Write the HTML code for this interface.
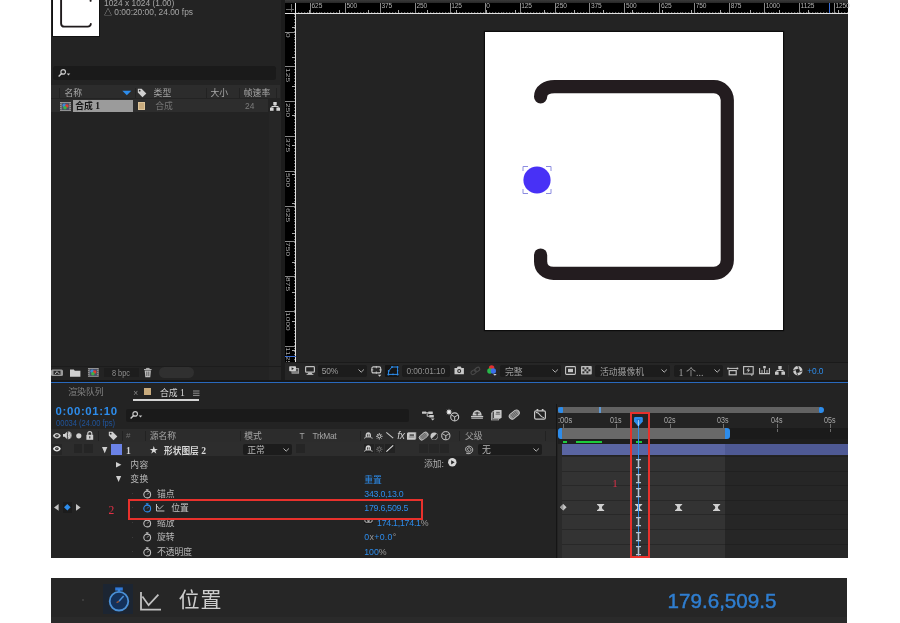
<!DOCTYPE html>
<html><head><meta charset="utf-8"><title>AE</title><style>
*{margin:0;padding:0;box-sizing:border-box}
html,body{width:900px;height:623px;background:#fff;overflow:hidden}
body{position:relative;font-family:"Liberation Sans","Noto Sans CJK SC",sans-serif;font-size:9px;color:#a8a8a8}
.a{position:absolute;display:block}
.t{position:absolute;white-space:nowrap}
svg{overflow:visible}
#w{position:absolute;left:0;top:0;width:900px;height:623px;will-change:transform}
</style></head><body><div id="w">
<div class="a" style="left:51px;top:0px;width:797px;height:558px;background:#232323;"></div>
<div class="a" style="left:52.7px;top:0px;width:46.4px;height:35.7px;background:#fff;box-shadow:0 0 0 1px #121212"></div>
<svg class="a" style="left:53px;top:0px;" width="46" height="36" viewBox="0 0 46 36"><path d="M8.1 0V23.4Q8.1 26.6 11.4 26.6H34.6Q37.6 26.6 37.8 24M37.6 0V0.9" fill="none" stroke="#1f1a1c" stroke-width="1.9" stroke-linecap="round"/></svg>
<div class="t" style="left:104px;top:-1.20px;font-size:8.4px;line-height:8.4px;color:#a6a6a6;">1024 x 1024 (1.00)</div>
<div class="t" style="left:104px;top:8.30px;font-size:8.4px;line-height:8.4px;color:#a6a6a6;"><span style="font-size:8px">△</span> 0:00:20:00, 24.00 fps</div>
<div class="a" style="left:53px;top:66px;width:223px;height:13.6px;background:#1a1a1a;border-radius:2.5px"></div>
<svg class="a" style="left:57.5px;top:68.8px;" width="13" height="8.2" viewBox="0 0 13 8.2"><circle cx="5.2" cy="2.9" r="2.3" fill="none" stroke="#c8c8c8" stroke-width="1.2"/><path d="M3.6 4.6L0.6 7.6" stroke="#c8c8c8" stroke-width="1.4"/><path d="M8.7 4.6H12.3L10.5 6.6z" fill="#c8c8c8"/></svg>
<div class="a" style="left:51px;top:85.4px;width:229px;height:12.6px;background:#2c2c2c;"></div>
<div class="a" style="left:59.0px;top:87.5px;width:1px;height:10px;background:#222;"></div>
<div class="a" style="left:134.5px;top:87.5px;width:1px;height:10px;background:#222;"></div>
<div class="a" style="left:205.5px;top:87.5px;width:1px;height:10px;background:#222;"></div>
<div class="a" style="left:239.0px;top:87.5px;width:1px;height:10px;background:#222;"></div>
<div class="a" style="left:275.5px;top:87.5px;width:1px;height:10px;background:#222;"></div>
<div class="t" style="left:64.4px;top:88.80px;font-size:8.8px;line-height:8.8px;color:#a8a8a8;">名称</div>
<svg class="a" style="left:121.5px;top:90px;" width="10" height="6" viewBox="0 0 10 6"><path d="M0.3 0.8H9.3L4.8 5.2z" fill="#2d8ceb"/></svg>
<svg class="a" style="left:136.5px;top:87.5px;" width="10" height="10" viewBox="0 0 10 10"><path d="M0.8 0.8H4.6L9.3 5.5L5.5 9.3L0.8 4.6z" fill="#d0d0d0"/><circle cx="2.7" cy="2.7" r="0.9" fill="#2d2d2d"/></svg>
<div class="t" style="left:153.6px;top:88.80px;font-size:8.8px;line-height:8.8px;color:#a8a8a8;">类型</div>
<div class="t" style="left:210.5px;top:88.80px;font-size:8.8px;line-height:8.8px;color:#a8a8a8;">大小</div>
<div class="t" style="left:243.8px;top:88.80px;font-size:8.8px;line-height:8.8px;color:#a8a8a8;">帧速率</div>
<div class="a" style="left:51px;top:99.4px;width:216.5px;height:12.6px;background:#2d2d2d;"></div>
<svg class="a" style="left:60px;top:101.5px;" width="11" height="9" viewBox="0 0 11 9"><rect x="0" y="0" width="11" height="9" fill="#9a9a9a"/><rect x="1.7" y="0.9" width="7.6" height="7.2" fill="#4a5068"/><g fill="#3a3a3a"><rect x="0.4" y="1" width="0.9" height="1.1"/><rect x="0.4" y="3" width="0.9" height="1.1"/><rect x="0.4" y="5" width="0.9" height="1.1"/><rect x="0.4" y="7" width="0.9" height="1.1"/><rect x="9.7" y="1" width="0.9" height="1.1"/><rect x="9.7" y="3" width="0.9" height="1.1"/><rect x="9.7" y="5" width="0.9" height="1.1"/><rect x="9.7" y="7" width="0.9" height="1.1"/></g><circle cx="4.3" cy="3.4" r="1.8" fill="#3c8ad8"/><circle cx="6.8" cy="4" r="1.8" fill="#e03a30"/><circle cx="5" cy="5.8" r="1.8" fill="#3cb048"/></svg>
<div class="a" style="left:72.6px;top:99.6px;width:60.4px;height:12.2px;background:#9b9b9b;"></div>
<div class="t" style="left:75.2px;top:102.00px;font-size:8.8px;line-height:8.8px;color:#141414;font-weight:bold">合成 <span style="font-family:'Liberation Serif',serif;font-size:9.5px">1</span></div>
<div class="a" style="left:138px;top:102.4px;width:7px;height:7.2px;background:#c9ab7d;border:0.6px solid #dcc49a"></div>
<div class="t" style="left:155.3px;top:102.00px;font-size:8.8px;line-height:8.8px;color:#747474;">合成</div>
<div class="t" style="left:245px;top:102.10px;font-size:8.4px;line-height:8.4px;color:#7c7c7c;">24</div>
<svg class="a" style="left:270px;top:101.5px;" width="10.0" height="9.0" viewBox="0 0 10 9"><rect x="3.3" y="0" width="3.4" height="3.2" fill="#d4d4d4"/><rect x="0" y="5.6" width="3.6" height="3.2" fill="#d4d4d4"/><rect x="6.4" y="5.6" width="3.6" height="3.2" fill="#d4d4d4"/><path d="M5 3V4.6M1.8 5.8V4.5H8.2V5.8" stroke="#d4d4d4" stroke-width="1" fill="none"/></svg>
<div class="a" style="left:268.5px;top:112px;width:12.5px;height:268px;background:#262626;"></div>
<div class="a" style="left:281px;top:0px;width:4px;height:380px;background:#1c1c1c;"></div>
<div class="a" style="left:51px;top:365.5px;width:230px;height:1px;background:#1c1c1c;"></div>
<svg class="a" style="left:51px;top:369px;" width="12.5" height="7.5" viewBox="0 0 12.5 7.5"><rect x="0" y="0.5" width="12" height="6.5" rx="1.5" fill="#9a9a9a"/><rect x="2.5" y="1.8" width="7" height="4" fill="#2a2a2a"/><path d="M4 5.2L6 2.6L8.5 5.2" stroke="#ddd" stroke-width="0.8" fill="none"/></svg>
<svg class="a" style="left:70px;top:368.5px;" width="10.5" height="8" viewBox="0 0 10.5 8"><path d="M0 0.6H3.8L4.8 1.8H10.4V7.8H0z" fill="#cfcfcf"/></svg>
<svg class="a" style="left:87px;top:368.3px;" width="12.7" height="8.8" viewBox="0 0 11 9"><rect x="0" y="0" width="11" height="9" fill="#9a9a9a"/><rect x="1.7" y="0.9" width="7.6" height="7.2" fill="#4a5068"/><g fill="#3a3a3a"><rect x="0.4" y="1" width="0.9" height="1.1"/><rect x="0.4" y="3" width="0.9" height="1.1"/><rect x="0.4" y="5" width="0.9" height="1.1"/><rect x="0.4" y="7" width="0.9" height="1.1"/><rect x="9.7" y="1" width="0.9" height="1.1"/><rect x="9.7" y="3" width="0.9" height="1.1"/><rect x="9.7" y="5" width="0.9" height="1.1"/><rect x="9.7" y="7" width="0.9" height="1.1"/></g><circle cx="4.3" cy="3.4" r="1.8" fill="#3c8ad8"/><circle cx="6.8" cy="4" r="1.8" fill="#e03a30"/><circle cx="5" cy="5.8" r="1.8" fill="#3cb048"/></svg>
<div class="a" style="left:104px;top:368px;width:34.5px;height:9px;background:#1d1d1d;border-radius:1px"></div>
<div class="t" style="left:112.2px;top:369.20px;font-size:8.4px;line-height:8.4px;color:#909090;transform-origin:0 50%;transform:scaleX(0.875)">8 bpc</div>
<svg class="a" style="left:144px;top:367.8px;" width="7.6" height="9.4" viewBox="0 0 7.6 9.4"><path d="M0 1.6H7.6M2.4 1.4V0.4H5.2V1.4" stroke="#bdbdbd" stroke-width="1" fill="none"/><path d="M0.7 2.6H6.9L6.3 9.2H1.3z" fill="#bdbdbd"/><path d="M2.8 3.6V8M4.8 3.6V8" stroke="#333" stroke-width="0.7"/></svg>
<div class="a" style="left:158.5px;top:367px;width:35px;height:10.5px;background:#303030;border-radius:5.5px"></div>
<div class="a" style="left:285px;top:0px;width:563px;height:3px;background:linear-gradient(#3a3a3a,#262626);"></div>
<div class="a" style="left:285px;top:3px;width:563px;height:11px;background:#000;"></div>
<div class="a" style="left:296px;top:12px;width:552px;height:1px;background:repeating-linear-gradient(90deg,#9a9a9a 0,#9a9a9a 1px,transparent 1px,transparent 2.935px);background-position:2.210px 0;opacity:.8"></div>
<div class="a" style="left:296px;top:13px;width:552px;height:1px;background:#e2e2e2;"></div>
<div class="a" style="left:310px;top:3px;width:1px;height:10px;background:#8a8a8a;"></div>
<div class="t" style="left:311.6px;top:2.90px;font-size:6.6px;line-height:6.6px;color:#b4b4b4;letter-spacing:-0.15px">625</div>
<div class="a" style="left:345px;top:3px;width:1px;height:10px;background:#8a8a8a;"></div>
<div class="t" style="left:346.53000000000003px;top:2.90px;font-size:6.6px;line-height:6.6px;color:#b4b4b4;letter-spacing:-0.15px">500</div>
<div class="a" style="left:380px;top:3px;width:1px;height:10px;background:#8a8a8a;"></div>
<div class="t" style="left:381.46000000000004px;top:2.90px;font-size:6.6px;line-height:6.6px;color:#b4b4b4;letter-spacing:-0.15px">375</div>
<div class="a" style="left:415px;top:3px;width:1px;height:10px;background:#8a8a8a;"></div>
<div class="t" style="left:416.39px;top:2.90px;font-size:6.6px;line-height:6.6px;color:#b4b4b4;letter-spacing:-0.15px">250</div>
<div class="a" style="left:450px;top:3px;width:1px;height:10px;background:#8a8a8a;"></div>
<div class="t" style="left:451.32000000000005px;top:2.90px;font-size:6.6px;line-height:6.6px;color:#b4b4b4;letter-spacing:-0.15px">125</div>
<div class="a" style="left:485px;top:3px;width:1px;height:10px;background:#8a8a8a;"></div>
<div class="t" style="left:486.25px;top:2.90px;font-size:6.6px;line-height:6.6px;color:#b4b4b4;letter-spacing:-0.15px">0</div>
<div class="a" style="left:520px;top:3px;width:1px;height:10px;background:#8a8a8a;"></div>
<div class="t" style="left:521.18px;top:2.90px;font-size:6.6px;line-height:6.6px;color:#b4b4b4;letter-spacing:-0.15px">125</div>
<div class="a" style="left:555px;top:3px;width:1px;height:10px;background:#8a8a8a;"></div>
<div class="t" style="left:556.11px;top:2.90px;font-size:6.6px;line-height:6.6px;color:#b4b4b4;letter-spacing:-0.15px">250</div>
<div class="a" style="left:589px;top:3px;width:1px;height:10px;background:#8a8a8a;"></div>
<div class="t" style="left:591.0400000000001px;top:2.90px;font-size:6.6px;line-height:6.6px;color:#b4b4b4;letter-spacing:-0.15px">375</div>
<div class="a" style="left:624px;top:3px;width:1px;height:10px;background:#8a8a8a;"></div>
<div class="t" style="left:625.97px;top:2.90px;font-size:6.6px;line-height:6.6px;color:#b4b4b4;letter-spacing:-0.15px">500</div>
<div class="a" style="left:659px;top:3px;width:1px;height:10px;background:#8a8a8a;"></div>
<div class="t" style="left:660.9px;top:2.90px;font-size:6.6px;line-height:6.6px;color:#b4b4b4;letter-spacing:-0.15px">625</div>
<div class="a" style="left:694px;top:3px;width:1px;height:10px;background:#8a8a8a;"></div>
<div class="t" style="left:695.83px;top:2.90px;font-size:6.6px;line-height:6.6px;color:#b4b4b4;letter-spacing:-0.15px">750</div>
<div class="a" style="left:729px;top:3px;width:1px;height:10px;background:#8a8a8a;"></div>
<div class="t" style="left:730.76px;top:2.90px;font-size:6.6px;line-height:6.6px;color:#b4b4b4;letter-spacing:-0.15px">875</div>
<div class="a" style="left:764px;top:3px;width:1px;height:10px;background:#8a8a8a;"></div>
<div class="t" style="left:765.6899999999999px;top:2.90px;font-size:6.6px;line-height:6.6px;color:#b4b4b4;letter-spacing:-0.15px">1000</div>
<div class="a" style="left:799px;top:3px;width:1px;height:10px;background:#8a8a8a;"></div>
<div class="t" style="left:800.62px;top:2.90px;font-size:6.6px;line-height:6.6px;color:#b4b4b4;letter-spacing:-0.15px">1125</div>
<div class="a" style="left:834px;top:3px;width:1px;height:10px;background:#8a8a8a;"></div>
<div class="t" style="left:835.5500000000001px;top:2.90px;font-size:6.6px;line-height:6.6px;color:#b4b4b4;letter-spacing:-0.15px">1250</div>
<div class="a" style="left:309px;top:10.3px;width:1px;height:2.7px;background:#a8a8a8;"></div>
<div class="a" style="left:339px;top:10.3px;width:1px;height:2.7px;background:#a8a8a8;"></div>
<div class="a" style="left:368px;top:10.3px;width:1px;height:2.7px;background:#a8a8a8;"></div>
<div class="a" style="left:398px;top:10.3px;width:1px;height:2.7px;background:#a8a8a8;"></div>
<div class="a" style="left:427px;top:10.3px;width:1px;height:2.7px;background:#a8a8a8;"></div>
<div class="a" style="left:456px;top:10.3px;width:1px;height:2.7px;background:#a8a8a8;"></div>
<div class="a" style="left:486px;top:10.3px;width:1px;height:2.7px;background:#a8a8a8;"></div>
<div class="a" style="left:515px;top:10.3px;width:1px;height:2.7px;background:#a8a8a8;"></div>
<div class="a" style="left:544px;top:10.3px;width:1px;height:2.7px;background:#a8a8a8;"></div>
<div class="a" style="left:574px;top:10.3px;width:1px;height:2.7px;background:#a8a8a8;"></div>
<div class="a" style="left:603px;top:10.3px;width:1px;height:2.7px;background:#a8a8a8;"></div>
<div class="a" style="left:632px;top:10.3px;width:1px;height:2.7px;background:#a8a8a8;"></div>
<div class="a" style="left:662px;top:10.3px;width:1px;height:2.7px;background:#a8a8a8;"></div>
<div class="a" style="left:691px;top:10.3px;width:1px;height:2.7px;background:#a8a8a8;"></div>
<div class="a" style="left:720px;top:10.3px;width:1px;height:2.7px;background:#a8a8a8;"></div>
<div class="a" style="left:750px;top:10.3px;width:1px;height:2.7px;background:#a8a8a8;"></div>
<div class="a" style="left:779px;top:10.3px;width:1px;height:2.7px;background:#a8a8a8;"></div>
<div class="a" style="left:808px;top:10.3px;width:1px;height:2.7px;background:#a8a8a8;"></div>
<div class="a" style="left:838px;top:10.3px;width:1px;height:2.7px;background:#a8a8a8;"></div>
<div class="a" style="left:829px;top:3px;width:1px;height:10px;background:#3a6fd8;"></div>
<div class="a" style="left:285px;top:14px;width:11px;height:348px;background:#000;"></div>
<div class="a" style="left:294px;top:14px;width:1px;height:348px;background:repeating-linear-gradient(180deg,#9a9a9a 0,#9a9a9a 1px,transparent 1px,transparent 2.935px);background-position:0 2.110px;opacity:.8"></div>
<div class="a" style="left:295px;top:14px;width:1px;height:348px;background:#e2e2e2;"></div>
<div class="a" style="left:285px;top:32px;width:10px;height:1px;background:#8a8a8a;"></div>
<div class="t" style="left:289.5px;top:33.0px;font-size:6.5px;line-height:6.5px;color:#a8a8a8;transform-origin:0 0;transform:rotate(90deg) scale(1.3,0.8);letter-spacing:0px">0</div>
<div class="a" style="left:285px;top:66px;width:10px;height:1px;background:#8a8a8a;"></div>
<div class="t" style="left:289.5px;top:67.9px;font-size:6.5px;line-height:6.5px;color:#a8a8a8;transform-origin:0 0;transform:rotate(90deg) scale(1.3,0.8);letter-spacing:0px">125</div>
<div class="a" style="left:285px;top:101px;width:10px;height:1px;background:#8a8a8a;"></div>
<div class="t" style="left:289.5px;top:102.8px;font-size:6.5px;line-height:6.5px;color:#a8a8a8;transform-origin:0 0;transform:rotate(90deg) scale(1.3,0.8);letter-spacing:0px">250</div>
<div class="a" style="left:285px;top:136px;width:10px;height:1px;background:#8a8a8a;"></div>
<div class="t" style="left:289.5px;top:137.7px;font-size:6.5px;line-height:6.5px;color:#a8a8a8;transform-origin:0 0;transform:rotate(90deg) scale(1.3,0.8);letter-spacing:0px">375</div>
<div class="a" style="left:285px;top:171px;width:10px;height:1px;background:#8a8a8a;"></div>
<div class="t" style="left:289.5px;top:172.6px;font-size:6.5px;line-height:6.5px;color:#a8a8a8;transform-origin:0 0;transform:rotate(90deg) scale(1.3,0.8);letter-spacing:0px">500</div>
<div class="a" style="left:285px;top:206px;width:10px;height:1px;background:#8a8a8a;"></div>
<div class="t" style="left:289.5px;top:207.5px;font-size:6.5px;line-height:6.5px;color:#a8a8a8;transform-origin:0 0;transform:rotate(90deg) scale(1.3,0.8);letter-spacing:0px">625</div>
<div class="a" style="left:285px;top:241px;width:10px;height:1px;background:#8a8a8a;"></div>
<div class="t" style="left:289.5px;top:242.4px;font-size:6.5px;line-height:6.5px;color:#a8a8a8;transform-origin:0 0;transform:rotate(90deg) scale(1.3,0.8);letter-spacing:0px">750</div>
<div class="a" style="left:285px;top:276px;width:10px;height:1px;background:#8a8a8a;"></div>
<div class="t" style="left:289.5px;top:277.3px;font-size:6.5px;line-height:6.5px;color:#a8a8a8;transform-origin:0 0;transform:rotate(90deg) scale(1.3,0.8);letter-spacing:0px">875</div>
<div class="a" style="left:285px;top:311px;width:10px;height:1px;background:#8a8a8a;"></div>
<div class="t" style="left:289.5px;top:312.2px;font-size:6.5px;line-height:6.5px;color:#a8a8a8;transform-origin:0 0;transform:rotate(90deg) scale(1.3,0.8);letter-spacing:0px">1000</div>
<div class="a" style="left:285px;top:346px;width:10px;height:1px;background:#8a8a8a;"></div>
<div class="t" style="left:289.5px;top:347.1px;font-size:6.5px;line-height:6.5px;color:#a8a8a8;transform-origin:0 0;transform:rotate(90deg) scale(1.3,0.8);letter-spacing:0px">1125</div>
<div class="a" style="left:292.3px;top:27px;width:2.7px;height:1px;background:#a8a8a8;"></div>
<div class="a" style="left:292.3px;top:57px;width:2.7px;height:1px;background:#a8a8a8;"></div>
<div class="a" style="left:292.3px;top:86px;width:2.7px;height:1px;background:#a8a8a8;"></div>
<div class="a" style="left:292.3px;top:115px;width:2.7px;height:1px;background:#a8a8a8;"></div>
<div class="a" style="left:292.3px;top:145px;width:2.7px;height:1px;background:#a8a8a8;"></div>
<div class="a" style="left:292.3px;top:174px;width:2.7px;height:1px;background:#a8a8a8;"></div>
<div class="a" style="left:292.3px;top:203px;width:2.7px;height:1px;background:#a8a8a8;"></div>
<div class="a" style="left:292.3px;top:233px;width:2.7px;height:1px;background:#a8a8a8;"></div>
<div class="a" style="left:292.3px;top:262px;width:2.7px;height:1px;background:#a8a8a8;"></div>
<div class="a" style="left:292.3px;top:292px;width:2.7px;height:1px;background:#a8a8a8;"></div>
<div class="a" style="left:292.3px;top:321px;width:2.7px;height:1px;background:#a8a8a8;"></div>
<div class="a" style="left:292.3px;top:350px;width:2.7px;height:1px;background:#a8a8a8;"></div>
<div class="a" style="left:285px;top:356px;width:11px;height:1px;background:#3a6fd8;"></div>
<div class="a" style="left:285px;top:3px;width:11px;height:11px;background:#000;"></div>
<div class="a" style="left:285px;top:13px;width:11px;height:1px;background:#e4e4e4;"></div>
<div class="a" style="left:295px;top:3px;width:1px;height:11px;background:#e4e4e4;"></div>
<div class="a" style="left:291px;top:4px;width:1px;height:8px;background:#6a6a6a;"></div>
<div class="a" style="left:286px;top:9px;width:8px;height:1px;background:#6a6a6a;"></div>
<div class="a" style="left:484.6px;top:31.8px;width:298.4px;height:298px;background:#fff;box-shadow:0 0 0 1.2px #0c0c0c"></div>
<svg class="a" style="left:485px;top:32px;" width="298" height="298" viewBox="0 0 298 298"><path d="M55.6 64.8C55.6 58.5 61.5 54.6 69.5 54.6H228.8A13.5 13.5 0 0 1 242.3 68.1V227.9A13.5 13.5 0 0 1 228.8 241.4H68.5C61 241.4 55.6 236.4 55.6 229.4V223" fill="none" stroke="#231c1f" stroke-width="13.2" stroke-linecap="round"/><circle cx="52" cy="148" r="13.6" fill="#4831f6"/><path d="M38 139V134.5H43M61 134.5H66V139M66 157V161.5H61M43 161.5H38V157" fill="none" stroke="#8c8ce0" stroke-width="1"/></svg>
<div class="a" style="left:285px;top:362px;width:563px;height:1px;background:#1a1a1a;"></div>
<div class="a" style="left:285px;top:363px;width:563px;height:17px;background:#262626;"></div>
<svg class="a" style="left:288.8px;top:366.2px;" width="10" height="7.6" viewBox="0 0 10 7.6"><rect x="3" y="2.6" width="6.6" height="4.6" fill="#4a4a4a" stroke="#a8a8a8" stroke-width="0.9"/><path d="M4 5.4H9.4M4 6.4H9.4" stroke="#a8a8a8" stroke-width="0.5"/><rect x="0.2" y="0.2" width="6.8" height="5" rx="0.7" fill="#cdcdcd"/><path d="M2.6 1.3V4.1L5 2.7z" fill="#222"/></svg>
<svg class="a" style="left:304.5px;top:365.8px;" width="10" height="9" viewBox="0 0 10 9"><rect x="0.6" y="0.6" width="8.8" height="5.6" rx="0.8" fill="none" stroke="#bdbdbd" stroke-width="1.2"/><path d="M3.4 6.4H6.6L7.4 8.2H2.6z" fill="#bdbdbd"/><path d="M1.6 8.4H8.4" stroke="#bdbdbd" stroke-width="0.9"/></svg>
<div class="a" style="left:318px;top:364.5px;width:49px;height:12.5px;background:#1c1c1c;border-radius:2px"></div>
<div class="t" style="left:321.8px;top:367.40px;font-size:8.4px;line-height:8.4px;color:#9e9e9e;letter-spacing:-0.15px">50%</div>
<svg class="a" style="left:357.8px;top:368.7px;" width="6.4" height="4" viewBox="0 0 6.4 4"><path d="M0.5 0.5L3.2 3.2L5.9 0.5" fill="none" stroke="#b4b4b4" stroke-width="1"/></svg>
<svg class="a" style="left:370.5px;top:365.8px;" width="10.8" height="11" viewBox="0 0 10.8 11"><rect x="0.9" y="0.9" width="8.8" height="6" rx="1.3" fill="none" stroke="#c8c8c8" stroke-width="1.1"/><path d="M5.3 0V2.3M5.3 5.5V7.8M0 3.9H2.3M8.3 3.9H10.6" stroke="#c8c8c8" stroke-width="0.9"/><path d="M6.9 8.7H10.3L8.6 10.7z" fill="#c8c8c8"/></svg>
<div class="a" style="left:385px;top:364.5px;width:14px;height:12.5px;background:#151515;border-radius:1px"></div>
<svg class="a" style="left:386.5px;top:366px;" width="11.5" height="9.5" viewBox="0 0 11.5 9.5"><path d="M1.4 8.4L1.7 4.9L5 1H10.6V8.4z" fill="none" stroke="#2d8ceb" stroke-width="1"/><g fill="#2d8ceb"><circle cx="1.4" cy="8.4" r="1"/><circle cx="1.7" cy="4.9" r="0.9"/><circle cx="5" cy="1" r="0.9"/><circle cx="10.6" cy="1" r="0.9"/><circle cx="10.6" cy="8.4" r="1"/><circle cx="10.6" cy="4.7" r="0.8"/><circle cx="6" cy="8.4" r="0.8"/></g></svg>
<div class="a" style="left:401.5px;top:364.5px;width:48.5px;height:12.5px;background:#1c1c1c;border-radius:2px"></div>
<div class="t" style="left:406.5px;top:367.20px;font-size:8.4px;line-height:8.4px;color:#8e8e8e;letter-spacing:-0.1px">0:00:01:10</div>
<svg class="a" style="left:453.8px;top:366px;" width="10.4" height="8.8" viewBox="0 0 10.4 8.8"><path d="M0.5 2H2.8L3.7 0.5H6.7L7.6 2H9.9V8.3H0.5z" fill="#c8c8c8"/><circle cx="5.2" cy="5" r="2" fill="#262626"/><circle cx="5.2" cy="5" r="1" fill="#c8c8c8"/></svg>
<svg class="a" style="left:470px;top:365.5px;" width="11" height="10" viewBox="0 0 11 10"><rect x="0.8" y="4.4" width="5.6" height="3.6" rx="1.8" transform="rotate(-35 3.6 6.2)" fill="none" stroke="#484848" stroke-width="1.1"/><rect x="4.4" y="1.8" width="5.6" height="3.6" rx="1.8" transform="rotate(-35 7.2 3.6)" fill="none" stroke="#484848" stroke-width="1.1"/></svg>
<svg class="a" style="left:486.5px;top:364.8px;" width="10" height="11" viewBox="0 0 10 11"><circle cx="4.6" cy="3" r="2.7" fill="#e23030"/><circle cx="2.9" cy="6" r="2.7" fill="#28b84a"/><circle cx="6.3" cy="6" r="2.7" fill="#3b6fe8"/><path d="M6.2 9H9.6L7.9 10.8z" fill="#d0d0d0"/></svg>
<div class="a" style="left:499.5px;top:364.5px;width:61.5px;height:12.5px;background:#1c1c1c;border-radius:2px"></div>
<div class="t" style="left:505px;top:368.00px;font-size:8.8px;line-height:8.8px;color:#9e9e9e;">完整</div>
<svg class="a" style="left:551.8px;top:368.7px;" width="6.4" height="4" viewBox="0 0 6.4 4"><path d="M0.5 0.5L3.2 3.2L5.9 0.5" fill="none" stroke="#b4b4b4" stroke-width="1"/></svg>
<svg class="a" style="left:565px;top:366.2px;" width="11" height="9" viewBox="0 0 11 9"><rect x="0.6" y="0.6" width="9.8" height="7.8" rx="0.8" fill="none" stroke="#c4c4c4" stroke-width="1.1"/><rect x="3" y="2.8" width="5" height="3.4" fill="#c4c4c4"/></svg>
<svg class="a" style="left:581.2px;top:366.4px;" width="10.8" height="8.6" viewBox="0 0 10.8 8.6"><rect x="0" y="0" width="10.8" height="8.6" rx="0.8" fill="#b8b8b8"/><g fill="#2a2a2a"><rect x="1.4" y="1.3" width="2" height="2"/><rect x="5.4" y="1.3" width="2" height="2"/><rect x="3.4" y="3.3" width="2" height="2"/><rect x="7.4" y="3.3" width="2" height="2"/><rect x="1.4" y="5.3" width="2" height="2"/><rect x="5.4" y="5.3" width="2" height="2"/></g></svg>
<div class="a" style="left:595.3px;top:364.5px;width:74.7px;height:12.5px;background:#1c1c1c;border-radius:2px"></div>
<div class="t" style="left:600px;top:368.00px;font-size:8.8px;line-height:8.8px;color:#9e9e9e;">活动摄像机</div>
<svg class="a" style="left:660.8px;top:368.7px;" width="6.4" height="4" viewBox="0 0 6.4 4"><path d="M0.5 0.5L3.2 3.2L5.9 0.5" fill="none" stroke="#b4b4b4" stroke-width="1"/></svg>
<div class="a" style="left:674px;top:364.5px;width:49px;height:12.5px;background:#1c1c1c;border-radius:2px"></div>
<div class="t" style="left:678.5px;top:367.90px;font-size:9px;line-height:9px;color:#9e9e9e;font-family:'Liberation Serif','Noto Sans CJK SC',serif;font-size:10px">1 个...</div>
<svg class="a" style="left:713.8px;top:368.7px;" width="6.4" height="4" viewBox="0 0 6.4 4"><path d="M0.5 0.5L3.2 3.2L5.9 0.5" fill="none" stroke="#b4b4b4" stroke-width="1"/></svg>
<svg class="a" style="left:726.5px;top:366.5px;" width="11.5" height="8.5" viewBox="0 0 11.5 8.5"><path d="M0.8 1.4H10.6" stroke="#c4c4c4" stroke-width="1"/><circle cx="1" cy="1.4" r="1" fill="#c4c4c4"/><circle cx="10.4" cy="1.4" r="1" fill="#c4c4c4"/><rect x="2.2" y="3.6" width="7" height="4.2" fill="none" stroke="#c4c4c4" stroke-width="1.2"/></svg>
<svg class="a" style="left:743px;top:365.8px;" width="11" height="10" viewBox="0 0 11 10"><rect x="0.6" y="0.6" width="9.6" height="7.4" fill="none" stroke="#c4c4c4" stroke-width="1.1"/><path d="M6 1.6L3.4 4.6H5.2L4.4 7L7.2 3.8H5.4z" fill="#c4c4c4"/><path d="M7.2 8.4H10.4L8.8 10z" fill="#c4c4c4"/></svg>
<svg class="a" style="left:759px;top:366px;" width="11" height="8.5" viewBox="0 0 11 8.5"><path d="M0.6 2V7.6H10.4V2" fill="none" stroke="#c4c4c4" stroke-width="1.1"/><rect x="4.2" y="0" width="2.6" height="2.4" fill="#c4c4c4"/><path d="M3 4V7.4M5.5 2.6V7.4M8 4V7.4" stroke="#c4c4c4" stroke-width="0.9"/></svg>
<svg class="a" style="left:774.7px;top:366.2px;" width="10.0" height="9.0" viewBox="0 0 10 9"><rect x="3.3" y="0" width="3.4" height="3.2" fill="#c8c8c8"/><rect x="0" y="5.6" width="3.6" height="3.2" fill="#c8c8c8"/><rect x="6.4" y="5.6" width="3.6" height="3.2" fill="#c8c8c8"/><path d="M5 3V4.6M1.8 5.8V4.5H8.2V5.8" stroke="#c8c8c8" stroke-width="1" fill="none"/></svg>
<div class="a" style="left:788px;top:365px;width:1px;height:12px;background:#333;"></div>
<svg class="a" style="left:792.8px;top:365.8px;" width="9.6" height="9.6" viewBox="0 0 9.6 9.6"><circle cx="4.8" cy="4.8" r="3.4" fill="none" stroke="#cccccc" stroke-width="2.6"/><path d="M4.8 0L6 3.2M9.6 4.8L6.6 6M4.8 9.6L3.6 6.4M0 4.8L3 3.6" stroke="#262626" stroke-width="0.8"/></svg>
<div class="t" style="left:807.3px;top:367.00px;font-size:8.4px;line-height:8.4px;color:#2d8ceb;letter-spacing:-0.1px">+0.0</div>
<div class="a" style="left:51px;top:380px;width:797px;height:1.6px;background:#171717;"></div>
<div class="a" style="left:51px;top:381.6px;width:797px;height:1.6px;background:#2969bd;"></div>
<div class="t" style="left:68.3px;top:388.40px;font-size:8.8px;line-height:8.8px;color:#858585;">渲染队列</div>
<div class="t" style="left:133.2px;top:389.20px;font-size:8.4px;line-height:8.4px;color:#8c8c8c;">×</div>
<div class="a" style="left:144px;top:388px;width:7px;height:7px;background:#c9ab7d;"></div>
<div class="t" style="left:160px;top:388.70px;font-size:8.8px;line-height:8.8px;color:#d2d2d2;">合成 <span style="font-family:'Liberation Serif',serif;font-size:9.8px">1</span></div>
<svg class="a" style="left:192.5px;top:389.5px;" width="6.5" height="6.5" viewBox="0 0 6.5 6.5"><path d="M0 1H6.5M0 3.2H6.5M0 5.4H6.5" stroke="#909090" stroke-width="1"/></svg>
<div class="a" style="left:133px;top:399.4px;width:66.3px;height:1.8px;background:#d4d4d4;"></div>
<div class="t" style="left:55.5px;top:405.50px;font-size:11.4px;line-height:11.4px;color:#2d8ceb;font-weight:bold;letter-spacing:0.65px">0:00:01:10</div>
<div class="t" style="left:56px;top:418.50px;font-size:8.4px;line-height:8.4px;color:#20549a;transform-origin:0 50%;transform:scaleX(0.9)">00034 (24.00 fps)</div>
<div class="a" style="left:126px;top:409px;width:283px;height:12.5px;background:#1a1a1a;border-radius:2px"></div>
<svg class="a" style="left:130.3px;top:411.2px;" width="13" height="8.2" viewBox="0 0 13 8.2"><circle cx="5.2" cy="2.9" r="2.3" fill="none" stroke="#c8c8c8" stroke-width="1.2"/><path d="M3.6 4.6L0.6 7.6" stroke="#c8c8c8" stroke-width="1.4"/><path d="M8.7 4.6H12.3L10.5 6.6z" fill="#c8c8c8"/></svg>
<svg class="a" style="left:421.5px;top:410.5px;" width="12.6" height="9.6" viewBox="0 0 12.6 9.6"><path d="M3 1.7H7M5.2 1.7V5.3H7.4" stroke="#c8c8c8" stroke-width="0.9" fill="none"/><rect x="0" y="0.6" width="4.2" height="2.2" rx="0.5" fill="#c8c8c8"/><rect x="6.2" y="0.4" width="4.6" height="2.6" rx="0.5" fill="#c8c8c8"/><rect x="7.2" y="4" width="4.6" height="2.6" rx="0.5" fill="#c8c8c8"/><path d="M8.8 7.6H12.6L10.7 9.6z" fill="#c8c8c8"/></svg>
<svg class="a" style="left:445.6px;top:408.6px;" width="13.2" height="12.4" viewBox="0 0 13.2 12.4"><path d="M3 -0.4L3.8 2.2L6.4 3L3.8 3.8L3 6.4L2.2 3.8L-0.4 3L2.2 2.2z" fill="#ececec"/><path d="M0.6 0.6L3 1.8L5.4 0.6L4.2 3L5.4 5.4L3 4.2L0.6 5.4L1.8 3z" fill="#dcdcdc"/><circle cx="3" cy="3" r="1.5" fill="#f0f0f0"/><circle cx="8.7" cy="7.9" r="4" fill="#232323" stroke="#c8c8c8" stroke-width="1.1"/><path d="M8.7 7.9V11.6M8.7 7.9L5.4 6M8.7 7.9L12 6" stroke="#c8c8c8" stroke-width="1" fill="none"/></svg>
<svg class="a" style="left:470.8px;top:409.8px;" width="12.2" height="9" viewBox="0 0 12.2 9"><path d="M1.5 5.6C1.5 2.4 3.6 0.2 6.1 0.2S10.7 2.4 10.7 5.6z" fill="#c8c8c8"/><rect x="0" y="5.9" width="12.2" height="1.3" fill="#c8c8c8"/><rect x="0.3" y="7.6" width="11.6" height="1.3" fill="#c8c8c8" opacity="0.8"/><path d="M6.1 1.8V5.6" stroke="#232323" stroke-width="1"/><path d="M3.6 3H8.6" stroke="#232323" stroke-width="0.9"/></svg>
<svg class="a" style="left:490.5px;top:409.5px;" width="10.6" height="10.4" viewBox="0 0 10.6 10.4"><rect x="0.5" y="3" width="7" height="6.9" fill="#232323" stroke="#a0a0a0" stroke-width="1"/><rect x="1.8" y="1.6" width="7.2" height="7" fill="#232323" stroke="#b0b0b0" stroke-width="0.9"/><rect x="3" y="0" width="7.6" height="8" rx="0.5" fill="#c8c8c8"/><rect x="5.2" y="1.8" width="3.6" height="1.6" fill="#666"/><rect x="4.6" y="3.6" width="4.6" height="1.4" fill="#8a8a8a"/></svg>
<svg class="a" style="left:509.2px;top:410.4px;" width="10.488000000000001" height="9.200000000000001" viewBox="0 0 11.4 10"><g transform="rotate(-38 5.7 5)"><rect x="-0.4" y="1.9" width="12.2" height="6.2" rx="3.1" fill="#8e8e8e" stroke="#c8c8c8" stroke-width="1"/><path d="M3 2.2V7.8M4.8 2V8M6.6 2V8M8.4 2.2V7.8" stroke="#5a5a5a" stroke-width="0.8"/></g></svg>
<svg class="a" style="left:533.8px;top:409.2px;" width="12" height="10.8" viewBox="0 0 12 10.8"><rect x="0.6" y="1.8" width="10.8" height="8.4" rx="1.4" fill="none" stroke="#c8c8c8" stroke-width="1.2"/><rect x="2.6" y="0" width="1.7" height="1.8" fill="#c8c8c8"/><rect x="7.8" y="0" width="1.7" height="1.8" fill="#c8c8c8"/><path d="M1.8 3.4C7 3.4 5 8.7 10.2 8.7" fill="none" stroke="#c8c8c8" stroke-width="1.1"/></svg>
<div class="a" style="left:51px;top:428.8px;width:504.6px;height:13px;background:#2c2c2c;"></div>
<svg class="a" style="left:52.5px;top:433px;" width="7.8" height="5.6" viewBox="0 0 7.8 5.6"><path d="M0 2.8C1.6 -0.8 6.2 -0.8 7.8 2.8C6.2 6.4 1.6 6.4 0 2.8z" fill="#d0d0d0"/><ellipse cx="3.9" cy="2.8" rx="1.9" ry="1.5" fill="#222"/><circle cx="3.9" cy="2.8" r="0.55" fill="#d0d0d0"/></svg>
<svg class="a" style="left:63.2px;top:431.3px;" width="8.8" height="8.6" viewBox="0 0 8.8 8.6"><path d="M0 2.9H1.7L3.9 0.7V7.9L1.7 5.7H0z" fill="#d4d4d4"/><path d="M4.7 0.2A4.1 4.1 0 0 1 4.7 8.4z" fill="#9a9a9a"/><path d="M5.2 2.2Q6.4 4.3 5.2 6.4M6 0.9Q8.6 4.3 6 7.7" fill="none" stroke="#e0e0e0" stroke-width="0.9"/></svg>
<svg class="a" style="left:75.8px;top:432.7px;" width="5.6" height="5.6" viewBox="0 0 5.6 5.6"><circle cx="2.8" cy="2.8" r="2.6" fill="#d0d0d0"/></svg>
<svg class="a" style="left:85.8px;top:431px;" width="7.6" height="9" viewBox="0 0 7.6 9"><path d="M1.8 4V2.6A2 2 0 0 1 5.8 2.6V4" fill="none" stroke="#d0d0d0" stroke-width="1.1"/><rect x="0.4" y="3.8" width="6.8" height="5" fill="#d0d0d0"/><rect x="3.3" y="5.2" width="1" height="2.2" fill="#2a2a2a"/></svg>
<div class="a" style="left:97.5px;top:430.5px;width:1px;height:10px;background:#222;"></div>
<div class="a" style="left:121.5px;top:430.5px;width:1px;height:10px;background:#222;"></div>
<div class="a" style="left:144.5px;top:430.5px;width:1px;height:10px;background:#222;"></div>
<div class="a" style="left:239.5px;top:430.5px;width:1px;height:10px;background:#222;"></div>
<div class="a" style="left:360.0px;top:430.5px;width:1px;height:10px;background:#222;"></div>
<div class="a" style="left:458.5px;top:430.5px;width:1px;height:10px;background:#222;"></div>
<div class="a" style="left:545.0px;top:430.5px;width:1px;height:10px;background:#222;"></div>
<svg class="a" style="left:107.5px;top:430.8px;" width="10" height="10" viewBox="0 0 10 10"><path d="M0.8 0.8H4.6L9.3 5.5L5.5 9.3L0.8 4.6z" fill="#d0d0d0"/><circle cx="2.7" cy="2.7" r="0.9" fill="#2d2d2d"/></svg>
<div class="t" style="left:126px;top:432.20px;font-size:8px;line-height:8px;color:#6e6e6e;">#</div>
<div class="t" style="left:149.7px;top:432.20px;font-size:8.8px;line-height:8.8px;color:#a4a4a4;">源名称</div>
<div class="t" style="left:244.3px;top:432.20px;font-size:8.8px;line-height:8.8px;color:#a4a4a4;">模式</div>
<div class="t" style="left:299.6px;top:431.90px;font-size:8.4px;line-height:8.4px;color:#a4a4a4;">T</div>
<div class="t" style="left:312.5px;top:431.90px;font-size:8.4px;line-height:8.4px;color:#a4a4a4;letter-spacing:-0.32px">TrkMat</div>
<svg class="a" style="left:364.4px;top:432px;" width="8.6" height="6.8" viewBox="0 0 8.6 6.8"><path d="M1.6 5V3.4C1.6 1.4 2.8 0.2 4.3 0.2S7 1.4 7 3.4V5z" fill="#c8c8c8"/><rect x="3.05" y="2.3" width="0.8" height="2.7" fill="#2c2c2c"/><rect x="4.75" y="2.3" width="0.8" height="2.7" fill="#2c2c2c"/><path d="M0 6.2C1.2 6.2 1.6 5.6 2 5H6.6C7 5.6 7.4 6.2 8.6 6.2" stroke="#c8c8c8" stroke-width="0.9" fill="none"/></svg>
<svg class="a" style="left:376.2px;top:432.5px;" width="6.6" height="6.6" viewBox="0 0 6.6 6.6"><circle cx="3.3" cy="3.3" r="1.6" fill="none" stroke="#c8c8c8" stroke-width="1"/><path d="M3.3 0V1.3M3.3 5.3V6.6M0 3.3H1.3M5.3 3.3H6.6M1 1L1.9 1.9M4.7 4.7L5.6 5.6M5.6 1L4.7 1.9M1 5.6L1.9 4.7" stroke="#c8c8c8" stroke-width="0.9"/></svg>
<svg class="a" style="left:386.3px;top:432.3px;" width="7.5" height="6.4" viewBox="0 0 7.5 6.4"><path d="M0.3 0.3L7.2 6.1" stroke="#c8c8c8" stroke-width="1.1"/></svg>
<div class="t" style="left:397.2px;top:431.20px;font-size:10.4px;line-height:10.4px;color:#c8c8c8;font-family:'Liberation Sans',sans-serif;letter-spacing:-0.2px"><i>fx</i></div>
<svg class="a" style="left:407.4px;top:431.7px;" width="9.3" height="7.8" viewBox="0 0 9.3 7.8"><rect x="0.9" y="0" width="8.4" height="7" rx="0.6" fill="#8a8a8a"/><rect x="0" y="0.8" width="8.6" height="7" rx="0.6" fill="#c8c8c8"/><rect x="2.6" y="2.2" width="4.4" height="2" fill="#5a5a5a"/><rect x="1.8" y="4.4" width="5.6" height="1.3" fill="#8c8c8c"/></svg>
<svg class="a" style="left:418.6px;top:431.6px;" width="9.347999999999999" height="8.2" viewBox="0 0 11.4 10"><g transform="rotate(-38 5.7 5)"><rect x="-0.4" y="1.9" width="12.2" height="6.2" rx="3.1" fill="#8e8e8e" stroke="#c8c8c8" stroke-width="1"/><path d="M3 2.2V7.8M4.8 2V8M6.6 2V8M8.4 2.2V7.8" stroke="#5a5a5a" stroke-width="0.8"/></g></svg>
<svg class="a" style="left:430px;top:431.6px;" width="8.4" height="8.4" viewBox="0 0 8.4 8.4"><circle cx="4.2" cy="4.2" r="3.7" fill="#c8c8c8"/><path d="M1.6 6.8A3.7 3.7 0 0 0 6.8 1.6z" fill="#2d2d2d"/></svg>
<svg class="a" style="left:440.6px;top:431.2px;" width="9.6" height="9.4" viewBox="0 0 9.6 9.4"><circle cx="4.8" cy="4.7" r="4.1" fill="none" stroke="#c8c8c8" stroke-width="1"/><path d="M4.8 4.7V8.6M4.8 4.7L1.4 2.7M4.8 4.7L8.2 2.7" stroke="#c8c8c8" stroke-width="0.9"/></svg>
<div class="t" style="left:465px;top:432.20px;font-size:8.8px;line-height:8.8px;color:#a4a4a4;">父级</div>
<div class="a" style="left:51px;top:442.3px;width:504.6px;height:14px;background:#2d2d2d;"></div>
<div class="a" style="left:73.6px;top:444.2px;width:8.8px;height:9px;background:#252525;"></div>
<div class="a" style="left:84.3px;top:444.2px;width:9.2px;height:9px;background:#252525;"></div>
<div class="a" style="left:52px;top:443.5px;width:9.5px;height:11px;background:#262626;"></div>
<svg class="a" style="left:52.7px;top:446.2px;" width="7.8" height="5.6" viewBox="0 0 7.8 5.6"><path d="M0 2.8C1.6 -0.8 6.2 -0.8 7.8 2.8C6.2 6.4 1.6 6.4 0 2.8z" fill="#e8e8e8"/><ellipse cx="3.9" cy="2.8" rx="1.9" ry="1.5" fill="#222"/><circle cx="3.9" cy="2.8" r="0.55" fill="#e8e8e8"/></svg>
<svg class="a" style="left:102.3px;top:446.5px;" width="5.4" height="6.4" viewBox="0 0 5.4 6.4"><path d="M0 0H5.4L2.7 6.2z" fill="#d0d0d0"/></svg>
<div class="a" style="left:111px;top:443.7px;width:11px;height:11.3px;background:#6b82e6;"></div>
<div class="t" style="left:126px;top:445.80px;font-size:9.6px;line-height:9.6px;color:#d4d4d4;font-weight:bold;font-family:'Liberation Serif',serif">1</div>
<div class="t" style="left:149.6px;top:446.30px;font-size:8.6px;line-height:8.6px;color:#d8d8d8;">★</div>
<div class="t" style="left:164px;top:446.55px;font-size:8.7px;line-height:8.7px;color:#d8d8d8;font-weight:bold">形状图层 <span style="font-family:'Liberation Serif',serif;font-size:9.6px">2</span></div>
<div class="a" style="left:243px;top:443.7px;width:48.7px;height:11.3px;background:#1c1c1c;border-radius:2px"></div>
<div class="t" style="left:247.3px;top:446.00px;font-size:8.8px;line-height:8.8px;color:#b4b4b4;">正常</div>
<svg class="a" style="left:283.1px;top:448px;" width="6.4" height="4" viewBox="0 0 6.4 4"><path d="M0.5 0.5L3.2 3.2L5.9 0.5" fill="none" stroke="#b4b4b4" stroke-width="1"/></svg>
<div class="a" style="left:295.8px;top:444.3px;width:9.5px;height:9px;background:#252525;"></div>
<div class="a" style="left:363.6px;top:444.2px;width:10px;height:9px;background:#222;"></div>
<svg class="a" style="left:364.4px;top:445.3px;" width="8.6" height="6.8" viewBox="0 0 8.6 6.8"><path d="M1.6 5V3.4C1.6 1.4 2.8 0.2 4.3 0.2S7 1.4 7 3.4V5z" fill="#d4d4d4"/><rect x="3.05" y="2.3" width="0.8" height="2.7" fill="#222"/><rect x="4.75" y="2.3" width="0.8" height="2.7" fill="#222"/><path d="M0 6.2C1.2 6.2 1.6 5.6 2 5H6.6C7 5.6 7.4 6.2 8.6 6.2" stroke="#d4d4d4" stroke-width="0.9" fill="none"/></svg>
<div class="a" style="left:374.7px;top:444.2px;width:9.4px;height:9px;background:#252525;"></div>
<svg class="a" style="left:376.2px;top:445.6px;" width="6.6" height="6.6" viewBox="0 0 6.6 6.6"><circle cx="3.3" cy="3.3" r="1.6" fill="none" stroke="#6e6e6e" stroke-width="1"/><path d="M3.3 0V1.3M3.3 5.3V6.6M0 3.3H1.3M5.3 3.3H6.6M1 1L1.9 1.9M4.7 4.7L5.6 5.6M5.6 1L4.7 1.9M1 5.6L1.9 4.7" stroke="#6e6e6e" stroke-width="0.9"/></svg>
<div class="a" style="left:385.2px;top:444.2px;width:10px;height:9px;background:#222;"></div>
<svg class="a" style="left:386.3px;top:445.2px;" width="7.6" height="7" viewBox="0 0 7.6 7"><path d="M0.4 6.6L7.2 0.4" stroke="#e0e0e0" stroke-width="1.1"/></svg>
<div class="a" style="left:418.6px;top:444.2px;width:9.4px;height:9.1px;background:#262626;"></div>
<div class="a" style="left:429.2px;top:444.2px;width:9.4px;height:9.1px;background:#262626;"></div>
<div class="a" style="left:440.1px;top:444.2px;width:9.4px;height:9.1px;background:#262626;"></div>
<svg class="a" style="left:464px;top:444.9px;" width="9.5" height="9" viewBox="0 0 9.5 9"><path d="M5.14 5.02L5.03 5.15L4.87 5.26L4.68 5.34L4.46 5.37L4.23 5.35L3.99 5.28L3.77 5.14L3.58 4.95L3.43 4.70L3.35 4.42L3.35 4.12L3.42 3.81L3.57 3.51L3.81 3.24L4.12 3.02L4.48 2.88L4.89 2.81L5.31 2.84L5.74 2.96L6.13 3.18L6.47 3.49L6.73 3.88L6.89 4.33L6.94 4.81L6.86 5.30L6.66 5.78L6.34 6.21L5.92 6.58L5.40 6.84L4.81 6.99L4.19 7.01L3.57 6.89L2.98 6.63L2.46 6.24L2.04 5.74L1.74 5.15L1.60 4.50L1.61 3.82L1.80 3.15L2.16 2.52L2.66 1.98L3.30 1.56L4.04 1.27L4.85 1.16L5.67 1.22L6.48 1.46L7.21 1.88L7.84 2.45L8.31 3.15L8.61 3.96L8.70 4.81L8.58 5.68L8.25 6.52L7.71 7.27L6.99 7.89L6.13 8.35L5.16 8.62L4.14 8.67L3.12 8.50L2.16 8.10" fill="none" stroke="#c8c8c8" stroke-width="0.95"/></svg>
<div class="a" style="left:478px;top:443.7px;width:64px;height:11.3px;background:#1c1c1c;border-radius:2px"></div>
<div class="t" style="left:482px;top:446.00px;font-size:8.8px;line-height:8.8px;color:#b4b4b4;">无</div>
<svg class="a" style="left:532.6px;top:448px;" width="6.4" height="4" viewBox="0 0 6.4 4"><path d="M0.5 0.5L3.2 3.2L5.9 0.5" fill="none" stroke="#b4b4b4" stroke-width="1"/></svg>
<svg class="a" style="left:116.3px;top:461.99499999999995px;" width="5.6" height="5.6" viewBox="0 0 5.6 5.6"><path d="M0 0L5.4 2.7L0 5.4z" fill="#d0d0d0"/></svg>
<div class="t" style="left:130.3px;top:460.89px;font-size:8.8px;line-height:8.8px;color:#b8b8b8;letter-spacing:0.3px">内容</div>
<svg class="a" style="left:116.2px;top:476.325px;" width="5.4" height="6.2" viewBox="0 0 5.4 6.2"><path d="M0 0H5.2L2.6 6z" fill="#d0d0d0"/></svg>
<div class="t" style="left:130.3px;top:475.43px;font-size:8.8px;line-height:8.8px;color:#b8b8b8;letter-spacing:0.3px">变换</div>
<div class="t" style="left:424px;top:460.00px;font-size:8.8px;line-height:8.8px;color:#b0b0b0;">添加:</div>
<svg class="a" style="left:448px;top:458.195px;" width="8.6" height="8.6" viewBox="0 0 8.6 8.6"><circle cx="4.3" cy="4.3" r="4.2" fill="#d8d8d8"/><path d="M3.2 2.2L6.6 4.3L3.2 6.4z" fill="#232323"/></svg>
<div class="t" style="left:364.3px;top:475.83px;font-size:8.8px;line-height:8.8px;color:#2d8ceb;">重置</div>
<div class="a" style="left:132.4px;top:492.955px;width:1px;height:1px;background:#3c3c3c;"></div>
<svg class="a" style="left:143.3px;top:488.655px;" width="8.4" height="9.6" viewBox="0 0 8.4 9.6"><circle cx="4.2" cy="5.5" r="3.4" fill="none" stroke="#bcbcbc" stroke-width="1.1"/><path d="M2.9 0.7H5.5M4.2 0.7V2.2" stroke="#bcbcbc" stroke-width="1.1"/><path d="M4.2 5.5L5.7 3.8" stroke="#bcbcbc" stroke-width="0.8"/></svg>
<div class="t" style="left:156.9px;top:489.86px;font-size:8.8px;line-height:8.8px;color:#b8b8b8;">锚点</div>
<div class="a" style="left:132.4px;top:507.485px;width:1px;height:1px;background:#3c3c3c;"></div>
<svg class="a" style="left:143.3px;top:503.185px;" width="8.4" height="9.6" viewBox="0 0 8.4 9.6"><circle cx="4.2" cy="5.5" r="3.4" fill="none" stroke="#2d8ceb" stroke-width="1.1"/><path d="M2.9 0.7H5.5M4.2 0.7V2.2" stroke="#2d8ceb" stroke-width="1.1"/><path d="M4.2 5.5L5.7 3.8" stroke="#2d8ceb" stroke-width="0.8"/></svg>
<svg class="a" style="left:156px;top:504.285px;" width="8.4" height="7.6" viewBox="0 0 8.4 7.6"><path d="M0.5 0V7H8.4" fill="none" stroke="#c4c4c4" stroke-width="1"/><path d="M1.1 2L3.4 5.2L7.2 1.4" fill="none" stroke="#c4c4c4" stroke-width="0.9"/></svg>
<div class="t" style="left:171.3px;top:504.39px;font-size:8.8px;line-height:8.8px;color:#c4c4c4;">位置</div>
<div class="a" style="left:132.4px;top:522.015px;width:1px;height:1px;background:#3c3c3c;"></div>
<svg class="a" style="left:143.3px;top:517.715px;" width="8.4" height="9.6" viewBox="0 0 8.4 9.6"><circle cx="4.2" cy="5.5" r="3.4" fill="none" stroke="#bcbcbc" stroke-width="1.1"/><path d="M2.9 0.7H5.5M4.2 0.7V2.2" stroke="#bcbcbc" stroke-width="1.1"/><path d="M4.2 5.5L5.7 3.8" stroke="#bcbcbc" stroke-width="0.8"/></svg>
<div class="t" style="left:156.9px;top:518.92px;font-size:8.8px;line-height:8.8px;color:#b8b8b8;">缩放</div>
<div class="a" style="left:132.4px;top:536.545px;width:1px;height:1px;background:#3c3c3c;"></div>
<svg class="a" style="left:143.3px;top:532.245px;" width="8.4" height="9.6" viewBox="0 0 8.4 9.6"><circle cx="4.2" cy="5.5" r="3.4" fill="none" stroke="#bcbcbc" stroke-width="1.1"/><path d="M2.9 0.7H5.5M4.2 0.7V2.2" stroke="#bcbcbc" stroke-width="1.1"/><path d="M4.2 5.5L5.7 3.8" stroke="#bcbcbc" stroke-width="0.8"/></svg>
<div class="t" style="left:156.9px;top:533.45px;font-size:8.8px;line-height:8.8px;color:#b8b8b8;">旋转</div>
<div class="a" style="left:132.4px;top:551.0749999999999px;width:1px;height:1px;background:#3c3c3c;"></div>
<svg class="a" style="left:143.3px;top:546.775px;" width="8.4" height="9.6" viewBox="0 0 8.4 9.6"><circle cx="4.2" cy="5.5" r="3.4" fill="none" stroke="#bcbcbc" stroke-width="1.1"/><path d="M2.9 0.7H5.5M4.2 0.7V2.2" stroke="#bcbcbc" stroke-width="1.1"/><path d="M4.2 5.5L5.7 3.8" stroke="#bcbcbc" stroke-width="0.8"/></svg>
<div class="t" style="left:156.9px;top:547.98px;font-size:8.8px;line-height:8.8px;color:#b8b8b8;">不透明度</div>
<div class="t" style="left:364.3px;top:489.70px;font-size:8.8px;line-height:8.8px;color:#2d8ceb;letter-spacing:-0.25px">343.0,13.0</div>
<div class="t" style="left:364.3px;top:504.24px;font-size:8.8px;line-height:8.8px;color:#2d8ceb;letter-spacing:-0.25px">179.6,509.5</div>
<svg class="a" style="left:363.8px;top:518.115px;" width="9" height="5.4" viewBox="0 0 9 5.4"><rect x="0" y="0" width="9" height="5.4" fill="#161616"/><rect x="0.8" y="1.3" width="4.4" height="3" rx="1.5" fill="none" stroke="#d0d0d0" stroke-width="0.9"/><rect x="3.8" y="1.3" width="4.4" height="3" rx="1.5" fill="none" stroke="#d0d0d0" stroke-width="0.9"/></svg>
<div class="t" style="left:377px;top:518.77px;font-size:8.8px;line-height:8.8px;color:#2d8ceb;letter-spacing:-0.25px">174.1,174.1<span style="color:#9a9a9a">%</span></div>
<div class="t" style="left:364.3px;top:533.30px;font-size:8.8px;line-height:8.8px;color:#2d8ceb;letter-spacing:0.3px">0<span style="color:#9a9a9a">x</span>+0.0<span style="color:#9a9a9a">°</span></div>
<div class="t" style="left:364.3px;top:547.83px;font-size:8.8px;line-height:8.8px;color:#2d8ceb;letter-spacing:-0.1px">100<span style="color:#9a9a9a">%</span></div>
<svg class="a" style="left:53.5px;top:504.38500000000005px;" width="4.6" height="6.8" viewBox="0 0 4.6 6.8"><path d="M4.6 0V6.8L0 3.4z" fill="#c4c4c4"/></svg>
<div class="a" style="left:62.5px;top:502.285px;width:9.5px;height:11px;background:#1c1c1c;"></div>
<svg class="a" style="left:64px;top:504.485px;" width="6.6" height="6.6" viewBox="0 0 6.6 6.6"><path d="M3.3 0L6.6 3.3L3.3 6.6L0 3.3z" fill="#2d8ceb"/></svg>
<svg class="a" style="left:76.3px;top:504.38500000000005px;" width="4.6" height="6.8" viewBox="0 0 4.6 6.8"><path d="M0 0V6.8L4.6 3.4z" fill="#c4c4c4"/></svg>
<div class="t" style="left:108.5px;top:505.24px;font-size:11.5px;line-height:11.5px;color:#e23045;font-family:'Liberation Serif',serif">2</div>
<div class="a" style="left:555.6px;top:404px;width:1.5px;height:154px;background:#151515;"></div>
<div class="a" style="left:557.5px;top:407px;width:261.5px;height:6.3px;background:#626262;"></div>
<div class="a" style="left:557.8px;top:407px;width:4.8px;height:6.3px;background:#2d8ceb;border-radius:3.2px 1px 1px 3.2px / 3.15px 1px 1px 3.15px"></div>
<div class="a" style="left:818.7px;top:407px;width:5px;height:6.3px;background:#2d8ceb;border-radius:1px 3.2px 3.2px 1px / 1px 3.15px 3.15px 1px"></div>
<div class="a" style="left:599px;top:407px;width:1.6px;height:6.3px;background:#5f98d2;"></div>
<div class="t" style="left:558.2px;top:415.80px;font-size:8.4px;line-height:8.4px;color:#a8a8a8;transform-origin:0 50%;transform:scaleX(0.9)">:00s</div>
<div class="a" style="left:563px;top:423.8px;width:1px;height:4px;background:#707070;"></div>
<div class="t" style="left:610.35px;top:415.80px;font-size:8.4px;line-height:8.4px;color:#a8a8a8;transform-origin:0 50%;transform:scaleX(0.85)">01s</div>
<div class="a" style="left:616px;top:423.8px;width:1px;height:4px;background:#707070;"></div>
<div class="t" style="left:663.8px;top:415.80px;font-size:8.4px;line-height:8.4px;color:#a8a8a8;transform-origin:0 50%;transform:scaleX(0.85)">02s</div>
<div class="a" style="left:670px;top:423.8px;width:1px;height:4px;background:#707070;"></div>
<div class="t" style="left:717.25px;top:415.80px;font-size:8.4px;line-height:8.4px;color:#a8a8a8;transform-origin:0 50%;transform:scaleX(0.85)">03s</div>
<div class="a" style="left:723px;top:423.8px;width:1px;height:4px;background:#707070;"></div>
<div class="t" style="left:770.6999999999999px;top:415.80px;font-size:8.4px;line-height:8.4px;color:#a8a8a8;transform-origin:0 50%;transform:scaleX(0.85)">04s</div>
<div class="a" style="left:777px;top:423.8px;width:1px;height:4px;background:#707070;"></div>
<div class="t" style="left:824.15px;top:415.80px;font-size:8.4px;line-height:8.4px;color:#a8a8a8;transform-origin:0 50%;transform:scaleX(0.85)">05s</div>
<div class="a" style="left:830px;top:423.8px;width:1px;height:4px;background:#707070;"></div>
<div class="a" style="left:557.5px;top:428.3px;width:290.5px;height:10.7px;background:#1b1b1b;"></div>
<div class="a" style="left:560px;top:428.3px;width:167px;height:10.7px;background:#696969;"></div>
<div class="a" style="left:558.3px;top:428.3px;width:4.2px;height:10.7px;background:#2d8ceb;border-radius:3px 0 0 3px"></div>
<div class="a" style="left:725.3px;top:428.3px;width:4.4px;height:10.7px;background:#2d8ceb;border-radius:0 3px 3px 0"></div>
<div class="a" style="left:557.5px;top:439px;width:290.5px;height:4.7px;background:#1e1e1e;"></div>
<div class="a" style="left:777px;top:429px;width:1px;height:3px;background:#6a6a6a;"></div>
<div class="a" style="left:830px;top:429px;width:1px;height:3px;background:#6a6a6a;"></div>
<div class="a" style="left:563px;top:440.7px;width:3.7000000000000455px;height:2px;background:#1ccc3c;"></div>
<div class="a" style="left:575.8px;top:440.7px;width:26.700000000000045px;height:2px;background:#1ccc3c;"></div>
<div class="a" style="left:635.8px;top:440.7px;width:6.7000000000000455px;height:2px;background:#1ccc3c;"></div>
<div class="a" style="left:557.5px;top:443.7px;width:4.5px;height:114.3px;background:#2a2a2a;"></div>
<div class="a" style="left:562px;top:443.7px;width:163.3px;height:11.8px;background:#5a65a2;"></div>
<div class="a" style="left:725.3px;top:443.7px;width:122.7px;height:11.8px;background:#4e5994;"></div>
<div class="a" style="left:562px;top:456.3px;width:163.3px;height:101.7px;background:#333;"></div>
<div class="a" style="left:725.3px;top:456.3px;width:122.7px;height:101.7px;background:#262626;"></div>
<div class="a" style="left:562px;top:456px;width:286px;height:1px;background:#282828;"></div>
<div class="a" style="left:725.3px;top:456px;width:122.7px;height:1px;background:#202020;"></div>
<div class="a" style="left:562px;top:471px;width:286px;height:1px;background:#282828;"></div>
<div class="a" style="left:725.3px;top:471px;width:122.7px;height:1px;background:#202020;"></div>
<div class="a" style="left:562px;top:485px;width:286px;height:1px;background:#282828;"></div>
<div class="a" style="left:725.3px;top:485px;width:122.7px;height:1px;background:#202020;"></div>
<div class="a" style="left:562px;top:500px;width:286px;height:1px;background:#282828;"></div>
<div class="a" style="left:725.3px;top:500px;width:122.7px;height:1px;background:#202020;"></div>
<div class="a" style="left:562px;top:514px;width:286px;height:1px;background:#282828;"></div>
<div class="a" style="left:725.3px;top:514px;width:122.7px;height:1px;background:#202020;"></div>
<div class="a" style="left:562px;top:529px;width:286px;height:1px;background:#282828;"></div>
<div class="a" style="left:725.3px;top:529px;width:122.7px;height:1px;background:#202020;"></div>
<div class="a" style="left:562px;top:544px;width:286px;height:1px;background:#282828;"></div>
<div class="a" style="left:725.3px;top:544px;width:122.7px;height:1px;background:#202020;"></div>
<svg class="a" style="left:559.8px;top:503.885px;" width="6.6" height="6.6" viewBox="0 0 6.6 6.6"><path d="M3.3 0L6.6 3.3L3.3 6.6L0 3.3z" fill="#c8c8c8"/><path d="M3.3 0L0 3.3L3.3 6.6z" fill="#9a9a9a"/></svg>
<svg class="a" style="left:597.1px;top:503.685px;" width="7.2" height="7" viewBox="0 0 7.2 7"><path d="M0 0H7.2V0.8Q4.9 2 4.9 3.5Q4.9 5 7.2 6.2V7H0V6.2Q2.3 5 2.3 3.5Q2.3 2 0 0.8z" fill="#d0d0d0"/></svg>
<svg class="a" style="left:635.1px;top:503.685px;" width="7.2" height="7" viewBox="0 0 7.2 7"><path d="M0 0H7.2V0.8Q4.9 2 4.9 3.5Q4.9 5 7.2 6.2V7H0V6.2Q2.3 5 2.3 3.5Q2.3 2 0 0.8z" fill="#d0d0d0"/></svg>
<svg class="a" style="left:675.4px;top:503.685px;" width="7.2" height="7" viewBox="0 0 7.2 7"><path d="M0 0H7.2V0.8Q4.9 2 4.9 3.5Q4.9 5 7.2 6.2V7H0V6.2Q2.3 5 2.3 3.5Q2.3 2 0 0.8z" fill="#d0d0d0"/></svg>
<svg class="a" style="left:712.6999999999999px;top:503.685px;" width="7.2" height="7" viewBox="0 0 7.2 7"><path d="M0 0H7.2V0.8Q4.9 2 4.9 3.5Q4.9 5 7.2 6.2V7H0V6.2Q2.3 5 2.3 3.5Q2.3 2 0 0.8z" fill="#d0d0d0"/></svg>
<div class="a" style="left:638.2px;top:425px;width:1.2px;height:133px;background:#2d8ceb;"></div>
<svg class="a" style="left:636.3000000000001px;top:459.29499999999996px;" width="5" height="9.2" viewBox="0 0 5 9.2"><path d="M0 0.6H5M0 8.6H5" stroke="#b6c6d6" stroke-width="1.2" fill="none"/><path d="M2.5 0.6V8.6" stroke="#b6c6d6" stroke-width="1.5" fill="none"/></svg>
<svg class="a" style="left:636.3000000000001px;top:473.825px;" width="5" height="9.2" viewBox="0 0 5 9.2"><path d="M0 0.6H5M0 8.6H5" stroke="#b6c6d6" stroke-width="1.2" fill="none"/><path d="M2.5 0.6V8.6" stroke="#b6c6d6" stroke-width="1.5" fill="none"/></svg>
<svg class="a" style="left:636.3000000000001px;top:488.35499999999996px;" width="5" height="9.2" viewBox="0 0 5 9.2"><path d="M0 0.6H5M0 8.6H5" stroke="#b6c6d6" stroke-width="1.2" fill="none"/><path d="M2.5 0.6V8.6" stroke="#b6c6d6" stroke-width="1.5" fill="none"/></svg>
<svg class="a" style="left:636.3000000000001px;top:517.4150000000001px;" width="5" height="9.2" viewBox="0 0 5 9.2"><path d="M0 0.6H5M0 8.6H5" stroke="#b6c6d6" stroke-width="1.2" fill="none"/><path d="M2.5 0.6V8.6" stroke="#b6c6d6" stroke-width="1.5" fill="none"/></svg>
<svg class="a" style="left:636.3000000000001px;top:531.945px;" width="5" height="9.2" viewBox="0 0 5 9.2"><path d="M0 0.6H5M0 8.6H5" stroke="#b6c6d6" stroke-width="1.2" fill="none"/><path d="M2.5 0.6V8.6" stroke="#b6c6d6" stroke-width="1.5" fill="none"/></svg>
<svg class="a" style="left:636.3000000000001px;top:546.475px;" width="5" height="9.2" viewBox="0 0 5 9.2"><path d="M0 0.6H5M0 8.6H5" stroke="#b6c6d6" stroke-width="1.2" fill="none"/><path d="M2.5 0.6V8.6" stroke="#b6c6d6" stroke-width="1.5" fill="none"/></svg>
<svg class="a" style="left:633.8px;top:417.2px;" width="8.8" height="9.6" viewBox="0 0 8.8 9.6"><path d="M0 1.2Q0 0 1.2 0H7.6Q8.8 0 8.8 1.2V4.6L4.4 9.4L0 4.6z" fill="#2d8ceb"/><path d="M2.2 2.2H6.6L4.4 6z" fill="#1f6fc8"/><path d="M4.4 3V9" stroke="#cfe2f5" stroke-width="0.8"/></svg>
<div class="t" style="left:612.2px;top:478.10px;font-size:11px;line-height:11px;color:#d83048;font-family:'Liberation Serif',serif">1</div>
<div class="a" style="left:128px;top:499px;width:295px;height:21px;border:2px solid #e8312c"></div>
<div class="a" style="left:630.2px;top:412.2px;width:20px;height:145.6px;border:2px solid #e8312c"></div>
<div class="a" style="left:51px;top:578px;width:796px;height:45px;background:#262626;"></div>
<div class="a" style="left:51px;top:617px;width:796px;height:6px;background:#2a2a2a;"></div>
<div class="a" style="left:82px;top:599px;width:1.5px;height:1.5px;background:#3c3c3c;"></div>
<div class="a" style="left:102.5px;top:584px;width:30px;height:30px;background:#1c2532;"></div>
<svg class="a" style="left:108px;top:587px;" width="22" height="25" viewBox="0 0 22 25"><circle cx="11" cy="14.2" r="9.3" fill="#14315a" stroke="#4a90d6" stroke-width="1.8"/><path d="M7.2 2H14.8" stroke="#2f78d8" stroke-width="3.2"/><path d="M11 2V5" stroke="#3a84d8" stroke-width="2.4"/><path d="M11 14.2L15.6 9" stroke="#4a90d6" stroke-width="1.5"/><path d="M11 14.4L8.6 15.6" stroke="#a05838" stroke-width="1.2"/></svg>
<svg class="a" style="left:140px;top:591.5px;" width="21" height="19" viewBox="0 0 21 19"><path d="M1 0V17.6H21" fill="none" stroke="#c0c0c0" stroke-width="1.8"/><path d="M2.4 4.4L8.6 13.2L18.4 2.6" fill="none" stroke="#c0c0c0" stroke-width="1.7"/></svg>
<div class="t" style="left:178.5px;top:589.00px;font-size:21px;line-height:21px;color:#cdcdcd;letter-spacing:1px">位置</div>
<div class="t" style="left:667.6px;top:590.70px;font-size:20.6px;line-height:20.6px;color:#2f7ed0;-webkit-text-stroke:0.45px #2f7ed0">179.6,509.5</div>
</div></body></html>
